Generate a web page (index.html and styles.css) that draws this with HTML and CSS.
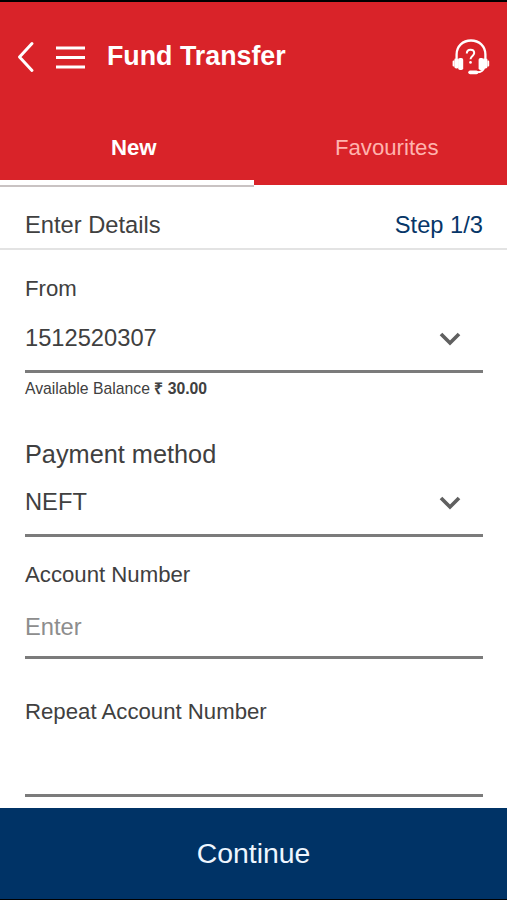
FILE: index.html
```html
<!DOCTYPE html>
<html lang="en">
<head>
<meta charset="utf-8">
<meta name="viewport" content="width=device-width, initial-scale=1">
<title>Fund Transfer</title>
<link rel="stylesheet" href="styles.css">
</head>
<body>
<div class="app">
  <header class="header">
    <svg class="back" width="18" height="32" viewBox="0 0 18 32"><path d="M15 2.500 2.500 16l12.500 13.500" fill="none" stroke="#fff" stroke-width="3" stroke-linecap="round" stroke-linejoin="round"/></svg>
    <svg class="menu" width="29" height="23" viewBox="0 0 29 23"><path d="M0 2h29M0 11.500h29M0 21h29" stroke="#fff" stroke-width="3"/></svg>
    <h1 class="title">Fund Transfer</h1>
    <svg class="support" width="38" height="36" viewBox="0 0 38 36">
      <path d="M4.600 19V15.500C4.600 7.200 10.800 1.500 19 1.500S33.400 7.200 33.400 15.500V19" fill="none" stroke="#fff" stroke-width="2.300"/>
      <path d="M32.500 28C31.500 31.500 29 33.300 25 33.300H19" fill="none" stroke="#fff" stroke-width="2"/>
      <rect x="2.300" y="19" width="4.500" height="10.500" rx="2" fill="#fff"/>
      <rect x="6.200" y="19" width="5" height="12" rx="1.800" fill="#fff"/>
      <rect x="26.600" y="19" width="5" height="12" rx="1.800" fill="#fff"/>
      <rect x="31" y="19" width="4.500" height="10.500" rx="2" fill="#fff"/>
      <path d="M1.500 22.500v4M36.300 22.500v4" stroke="#fff" stroke-width="1.800" stroke-linecap="round"/>
      <rect x="16.300" y="31.500" width="10" height="3.700" rx="1.850" fill="#fff"/>
      <path d="M14.800 14.500c0-2.500 1.500-3.700 3.700-3.700s3.700 1.200 3.700 3.300c0 2.700-3.700 3-3.700 6.200" fill="none" stroke="#fff" stroke-width="2"/>
      <circle cx="18.500" cy="23.400" r="1.300" fill="#fff"/>
    </svg>
  </header>
  <nav class="tabs">
    <a class="tab tab-active">New</a>
    <a class="tab">Favourites</a>
  </nav>
  <section class="step-bar">
    <span>Enter Details</span>
    <span class="step">Step 1/3</span>
  </section>
  <main class="form">
    <section class="field from">
      <div class="label">From</div>
      <div class="control"><span>1512520307</span><svg class="chevron" width="22" height="14" viewBox="0 0 22 14"><path d="m2 2 9 9 9-9" fill="none" stroke="#606060" stroke-width="3.700"/></svg></div>
      <div class="balance">Available Balance <b>₹ 30.00</b></div>
    </section>
    <section class="field method">
      <div class="label label-large">Payment method</div>
      <div class="control"><span>NEFT</span><svg class="chevron" width="22" height="14" viewBox="0 0 22 14"><path d="m2 2 9 9 9-9" fill="none" stroke="#606060" stroke-width="3.700"/></svg></div>
    </section>
    <section class="field account">
      <div class="label">Account Number</div>
      <div class="control placeholder">Enter</div>
    </section>
    <section class="field repeat">
      <div class="label">Repeat Account Number</div>
      <div class="control"></div>
    </section>
  </main>
  <div class="continue">Continue</div>
</div>
</body>
</html>
```
FILE: styles.css
```css
* {
  box-sizing: border-box;
}

body {
  margin: 0;
  background: #fff;
  color: #404040;
  font-family: "Liberation Sans", Arial, sans-serif;
}

.app {
  display: flex;
  flex-direction: column;
  width: 507px;
  height: 900px;
  overflow: hidden;
  border-top: 2px solid #000;
  border-bottom: 1px solid #000;
}

.header {
  display: flex;
  align-items: center;
  height: 110px;
  padding: 0 17px;
  background: #d92329;
}

.back {
  margin-right: 21px;
}

.menu {
  margin-right: 22px;
}

.title {
  flex: 1;
  margin: 0;
  padding-bottom: 3px;
  color: #fff;
  font-size: 26.800px;
  line-height: 32px;
}

.tabs {
  display: flex;
  height: 73px;
  background: #d92329;
}

.tab {
  width: 50%;
  height: 73px;
  padding-top: 21px;
  color: #ffb3ae;
  font-size: 22.200px;
  line-height: 30px;
  text-align: center;
}

.tab:last-child {
  padding-left: 13px;
}

.tab-active {
  padding-left: 14px;
  border-bottom: 5px solid #fff;
  color: #fff;
  font-weight: bold;
  box-shadow: 0 2px 0 #c9c3c3;
}

.step-bar {
  display: flex;
  justify-content: space-between;
  height: 65px;
  padding: 25px 24px 0 25px;
  border-bottom: 2px solid #e3e3e3;
  font-size: 23.700px;
  line-height: 30px;
}

.step {
  color: #063668;
}

.form {
  flex: 1;
  padding: 0 24px 0 25px;
}

.label {
  font-size: 22.200px;
  line-height: 28px;
}

.label-large {
  font-size: 25.300px;
}

.control {
  display: flex;
  align-items: center;
  justify-content: space-between;
  border-bottom: 3px solid #7b7b7b;
  font-size: 23.700px;
  line-height: 30px;
}

.chevron {
  margin: 2px 22px 0 0;
}

.placeholder {
  color: #8d8d8d;
}

.from {
  height: 190px;
  padding-top: 25px;
}

.from .control {
  height: 70px;
  padding-top: 2px;
}

.balance {
  padding-top: 6px;
  font-size: 15.750px;
  line-height: 20px;
}

.method {
  height: 97px;
}

.method .control {
  height: 69px;
  padding-top: 2px;
}

.account {
  height: 122px;
  padding-top: 24px;
}

.account .control {
  height: 70px;
  padding-top: 9px;
}

.repeat {
  padding-top: 39px;
}

.repeat .control {
  height: 71px;
}

.continue {
  display: flex;
  align-items: center;
  justify-content: center;
  height: 91px;
  background: #003366;
  color: #eef6ff;
  font-size: 28.400px;
}
```
